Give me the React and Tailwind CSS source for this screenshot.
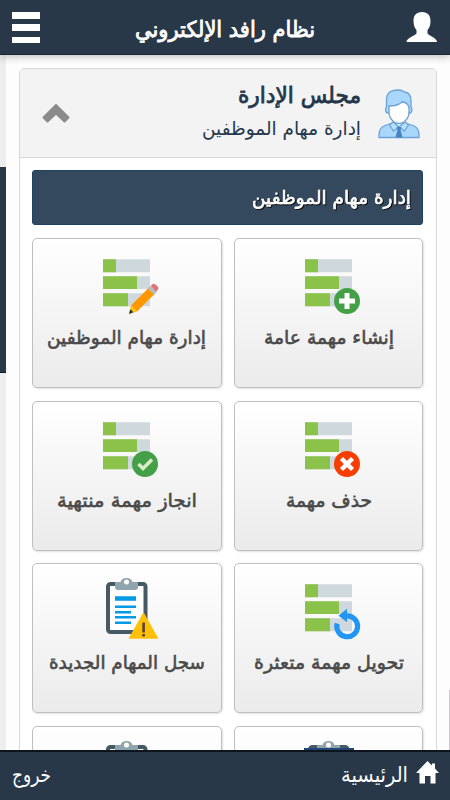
const cards = [
  { title: "إنشاء مهمة عامة", icon: "add", width: 130 },
  { title: "إدارة مهام الموظفين", icon: "edit", width: 159 },
  { title: "حذف مهمة", icon: "delete", width: 86 },
  { title: "انجاز مهمة منتهية", icon: "done", width: 140 },
  { title: "تحويل مهمة متعثرة", icon: "redo", width: 150 },
  { title: "سجل المهام الجديدة", icon: "log", width: 156 },
  { title: "", icon: "folder" },
  { title: "", icon: "clipboard" },
];

// Single line of Arabic text, fitted to a fixed width
function Label({ width, size, weight = 0, className = "", children }) {
  return (
    <svg width={width} height="30" className={`block overflow-visible ${className}`}>
      <text
        x={width}
        y="21"
        direction="rtl"
        fill="currentColor"
        stroke="currentColor"
        strokeWidth={weight}
        fontSize={size}
        textLength={width}
        lengthAdjust="spacingAndGlyphs"
      >
        {children}
      </text>
    </svg>
  );
}

function Badge({ type }) {
  if (type === "add")
    return (
      <g>
        <circle cx="50" cy="50" r="13" fill="#43a047" />
        <path d="M47.5 42h5v5.500h5.500v5h-5.500v5.500h-5v-5.500h-5.500v-5h5.500z" fill="#fff" />
      </g>
    );
  if (type === "delete")
    return (
      <g>
        <circle cx="50" cy="50" r="13" fill="#f83d00" />
        <path d="M44.500 44.500l11 11M55.500 44.500l-11 11" stroke="#fff" strokeWidth="4.500" />
      </g>
    );
  if (type === "done")
    return (
      <g>
        <circle cx="50" cy="50" r="13" fill="#43a047" />
        <path d="M43.500 50l4.500 4.500 9-9" fill="none" stroke="#dcedc8" strokeWidth="3.500" />
      </g>
    );
  if (type === "redo")
    return (
      <g>
        <path
          d="M40.200 47.500A10.400 10.400 0 1 0 49 40"
          fill="none"
          stroke="#2196f3"
          strokeWidth="5.200"
        />
        <path d="M41.500 39.800l8.500-7v13.500z" fill="#2196f3" />
      </g>
    );
  return (
    <g>
      <path d="M36 54.500L54.500 36l6 6L42 60.500z" fill="#ff9800" />
      <path d="M53 37.500l2.800-2.800 6 6-2.800 2.800z" fill="#b0bec5" />
      <path d="M55.800 34.700l1.300-1.300q1.700-1.300 3.300 0l2.200 2.200q1.700 1.700 0 3.300l-1.600 1.800z" fill="#e57373" />
      <path d="M36 54.500l6 6-8 2.500z" fill="#ffc107" />
      <path d="M35.300 58.200l3 3-4.300 1.800z" fill="#263238" />
    </g>
  );
}

function TaskIcon({ type }) {
  return (
    <svg width="64" height="64" viewBox="0 0 64 64">
      <path d="M8 8.300h47v13H8zM8 25.300h47v12.700H8zM8 42.200h47v13H8z" fill="#cfd8dc" />
      <path d="M8 8.300h13v13H8zM8 25.300h34v12.700H8zM8 42.200h25v13H8z" fill="#8bc34a" />
      <Badge type={type} />
    </svg>
  );
}

function ClipboardIcon({ type }) {
  return (
    <svg width="64" height="64" viewBox="0 0 64 64">
      <rect x="13" y="8" width="37.500" height="48" rx="2.500" fill="#fff" stroke="#455a64" strokeWidth="4" />
      <path d="M20 6h5.500a6.200 5.500 0 0 1 12 0H43v5q0 3-3 3H23q-3 0-3-3z" fill="#90a4ae" />
      <circle cx="31.500" cy="6" r="2.500" fill="#fff" />
      <path
        d="M20 20.300h21v4.400H20zM20 29.500h21V32H20zM20 35h16v2.400H20zM20 40h21v2.500H20zM20 45.500h16v2.400H20z"
        fill="#039be5"
      />
      {type === "log" && (
        <g>
          <path d="M48.500 37.500L62.300 62H34.700z" fill="#ffc107" stroke="#ffc107" strokeWidth="1.500" strokeLinejoin="round" />
          <path d="M47.300 46.500h2.600v10h-2.600zM47.300 58h2.600v2.500h-2.600z" fill="#5d4037" />
        </g>
      )}
      {type === "folder" && <path d="M7 9h50V58H7z" fill="#234577" />}
    </svg>
  );
}

function Card({ title, icon, width }) {
  const isClipboard = ["log", "clipboard", "folder"].includes(icon);
  return (
    <div className="flex h-[150px] flex-col items-center rounded-[5px] border border-[#bfbfbf] bg-linear-to-b from-white to-[#ebebeb] pt-3 odd:pl-px shadow-[1px_1px_2px_rgba(0,0,0,0.12)]">
      {isClipboard ? <ClipboardIcon type={icon} /> : <TaskIcon type={icon} />}
      {title && (
        <Label width={width} size="19" weight={0.6} className="mt-2 text-[#4a4a4a]">
          {title}
        </Label>
      )}
    </div>
  );
}

function Avatar() {
  return (
    <svg width="42" height="50" viewBox="0 0 42 50">
      <g stroke="#6ba3d6" strokeWidth="1.300" strokeLinejoin="round">
        <path d="M1 48.500v-3q0-7 6-9l9-3h10l9 3q6 2 6 9v3z" fill="#a9d7fb" />
        <path d="M9 24q-1.500-1-1.500-4l1-2v-7Q8.500 1 20 1q4 0 6.500 2Q33 3.500 33 12v6l1 2q0 3-1.500 4z" fill="#a9d7fb" />
        <path d="M16 29h10v5l-5 4-5-4z" fill="#fff" />
        <path d="M11 17q9 0 13-4 5 0 7 5v5q0 6-5 10-5 3-10 0-5-4-5-10z" fill="#fff" />
        <path d="M15 33l-3.500 3 4 6 5.500-4 5.500 4 4-6-3.500-3-6 5z" fill="#b9e0ff" />
      </g>
      <path d="M18.500 38h5l-1 3 2 7.500h-7l2-7.500z" fill="#4385c4" />
    </svg>
  );
}

function Header() {
  return (
    <header className="relative z-10 flex h-[55px] shrink-0 items-center justify-between border-b border-[#16273a] bg-[#293848] px-3 text-white shadow-[0_2px_8px_rgba(0,0,0,0.25)]">
      <svg width="32" height="31" viewBox="0 0 32 31">
        <path
          d="M16 0c6 0 8.500 3.500 8.500 9 0 4-1 7-3 9v3.500c1 2 9.500 4.500 9.500 8.500H0.500c0-4 9-6.500 10-8.500V18c-2-2-3-5-3-9C7.500 3.500 10 0 16 0z"
          fill="#fff"
        />
      </svg>
      <Label width={180} size="22" weight={0.8} className="mt-2 -mr-1">
        نظام رافد الإلكتروني
      </Label>
      <div className="flex h-[31px] w-7 flex-col justify-between">
        <span className="h-[7px] bg-white" />
        <span className="h-[7px] bg-white" />
        <span className="h-[6px] bg-white" />
      </div>
    </header>
  );
}

function Footer() {
  return (
    <footer className="relative z-10 flex h-[50px] shrink-0 items-center justify-between border-t-2 border-[#0c151e] bg-[#293848] px-3 text-white">
      <div className="flex items-center gap-2">
        <svg width="23" height="23" viewBox="0 0 23 23" className="-mt-2 -mr-px">
          <path d="M11.500 0L16 4.500V2.500h3v5l4 4.500h-3.500V22.500h-5V15h-5.500v7.500H3.500V12H0z" fill="#fff" />
        </svg>
        <Label width={67} size="21">
          الرئيسية
        </Label>
      </div>
      <Label width={39} size="21">
        خروج
      </Label>
    </footer>
  );
}

export default function App() {
  return (
    <div
      dir="rtl"
      className="flex h-[800px] w-[450px] flex-col overflow-hidden bg-white font-['DejaVu_Sans',sans-serif]"
    >
      <Header />
      <main className="flex min-h-0 flex-1 overflow-hidden">
        <div className="flex w-[13px] shrink-0 justify-start bg-[#fdfdfd]">
          <span className="mt-[635px] h-[60px] w-px bg-[#d9c5cf]" />
        </div>
        <section className="mt-[13px] h-[760px] w-[418px] shrink-0 rounded-t-[5px] border border-[#d9d9d9] bg-white">
          <div className="flex h-[89px] items-start rounded-t-[4px] border-b border-[#d9d9d9] bg-[#f3f3f3] pr-4">
            <div className="mt-5">
              <Avatar />
            </div>
            <div className="mr-[17px] mt-[13px] flex flex-1 flex-col">
              <Label width={123} size="22" weight={0.8} className="text-[#24364b]">
                مجلس الإدارة
              </Label>
              <Label width={159} size="19" className="mt-0.5 text-[#24364b]">
                إدارة مهام الموظفين
              </Label>
            </div>
            <svg width="28" height="19" viewBox="0 0 28 19" className="ml-[22px] mt-[35px]">
              <path
                d="M14 1L26.500 13.500 22.500 17.500 14 9.500 5.500 17.500 1.500 13.500z"
                fill="#8b8b8b"
                stroke="#8b8b8b"
                strokeWidth="2"
                strokeLinejoin="round"
              />
            </svg>
          </div>
          <div className="pt-3 pl-3 pr-[13px]">
            <div className="flex h-[55px] items-center rounded-[3px] border border-[#1f4260] bg-[#34495e] px-[11px] text-white">
              <Label width={159} size="19" weight={0.7} className="drop-shadow-[1px_1px_0_#111]">
                إدارة مهام الموظفين
              </Label>
            </div>
            <div className="mt-[13px] grid grid-cols-2 gap-x-3 gap-y-[12.6px]">
              {cards.map((card) => (
                <Card key={card.icon} {...card} />
              ))}
            </div>
          </div>
        </section>
        <div className="w-[13px] shrink-0 bg-[#fdfdfd]" />
        <div className="w-1.5 shrink-0 bg-[#eeeeee] pt-28">
          <div className="h-[206px] border-b border-[#111d29] bg-[#293848]" />
        </div>
      </main>
      <Footer />
    </div>
  );
}
